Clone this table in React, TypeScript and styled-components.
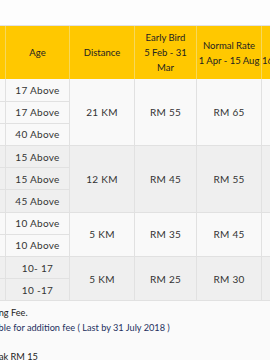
import React from 'react';
import styled, { createGlobalStyle } from 'styled-components';

const GlobalStyle = createGlobalStyle`
  html, body {
    margin: 0;
    padding: 0;
    background: #fafafa;
    overflow: hidden;
  }
  body {
    font-family: Lato, "Liberation Sans", sans-serif;
  }
`;

const Page = styled.div`
  width: 270px;
  height: 360px;
  overflow: hidden;
  background: #fafafa;
`;

const TopBar = styled.div`
  height: 25px;
  background: #fdfdfd;
  border-bottom: 1px solid #e2e2e2;
`;

// the table is wider than the window; the page is scrolled sideways
const Scroller = styled.div`
  margin-left: -95px;
  width: 520px;
`;

const PriceTable = styled.table`
  border-collapse: collapse;
  table-layout: fixed;
  width: 424px;
  font-size: 10px;
  color: #333;
`;

const Col = styled.col<{ $w: number }>`
  width: ${(p) => p.$w}px;
`;

const HeadCell = styled.th`
  height: 53px;
  padding: 0;
  box-sizing: border-box;
  background: #ffc800;
  border-left: 1px solid #f7d85a;
  color: #222;
  font-weight: 400;
  font-size: 9.5px;
  line-height: 15px;
  text-align: center;
  vertical-align: middle;
  white-space: nowrap;
  overflow: hidden;
`;

const Row = styled.tr<{ $shade: boolean }>`
  background: ${(p) => (p.$shade ? '#efefef' : '#f9f9f9')};
`;

const Cell = styled.td`
  height: 22.2px;
  padding: 0;
  box-sizing: border-box;
  border: 1px solid #e1e1e1;
  border-top: none;
  text-align: center;
  vertical-align: middle;
  white-space: nowrap;
  overflow: hidden;
  letter-spacing: 0.3px;
`;

const Notes = styled.div`
  padding: 5px 0 0 11px;
  font-size: 9.2px;
  line-height: 14.5px;
  color: #222;
  white-space: nowrap;
`;

const Note = styled.div<{ $blue?: boolean; $indent?: boolean }>`
  color: ${(p) => (p.$blue ? '#24305e' : '#222')};
  padding-left: ${(p) => (p.$indent ? 23 : 0)}px;
  min-height: 14.5px;
`;

type Group = {
  rows: { cat: string; age: string }[];
  distance: string;
  early: string;
  normal: string;
  late: string;
};

const groups: Group[] = [
  {
    rows: [
      { cat: 'Men Open', age: '17 Above' },
      { cat: 'Women Open', age: '17 Above' },
      { cat: 'Veteran', age: '40 Above' },
    ],
    distance: '21 KM',
    early: 'RM 55',
    normal: 'RM 65',
    late: 'RM 75',
  },
  {
    rows: [
      { cat: 'Men Open', age: '15 Above' },
      { cat: 'Women Open', age: '15 Above' },
      { cat: 'Veteran', age: '45 Above' },
    ],
    distance: '12 KM',
    early: 'RM 45',
    normal: 'RM 55',
    late: 'RM 65',
  },
  {
    rows: [
      { cat: 'Men Open', age: '10 Above' },
      { cat: 'Women Open', age: '10 Above' },
    ],
    distance: '5 KM',
    early: 'RM 35',
    normal: 'RM 45',
    late: 'RM 55',
  },
  {
    rows: [
      { cat: 'Boys', age: '10- 17' },
      { cat: 'Girls', age: '10 -17' },
    ],
    distance: '5 KM',
    early: 'RM 25',
    normal: 'RM 30',
    late: 'RM 35',
  },
];

const App: React.FC = () => {
  return (
    <Page>
      <GlobalStyle />
      <TopBar />
      <Scroller>
        <PriceTable>
          <colgroup>
            <Col $w={100} />
            <Col $w={64} />
            <Col $w={65} />
            <Col $w={62} />
            <Col $w={65} />
            <Col $w={68} />
          </colgroup>
          <thead>
            <tr>
              <HeadCell>Category</HeadCell>
              <HeadCell>Age</HeadCell>
              <HeadCell>Distance</HeadCell>
              <HeadCell>
                Early Bird
                <br />5 Feb - 31
                <br />Mar
              </HeadCell>
              <HeadCell>
                Normal Rate
                <br />1 Apr - 15 Aug
              </HeadCell>
              <HeadCell>
                Late Rate
                <br />16 Aug - 31 Aug
              </HeadCell>
            </tr>
          </thead>
          <tbody>
            {groups.map((g, gi) =>
              g.rows.map((r, ri) => (
                <Row key={`${gi}-${ri}`} $shade={gi % 2 === 1}>
                  <Cell>{r.cat}</Cell>
                  <Cell>{r.age}</Cell>
                  {ri === 0 && (
                    <>
                      <Cell rowSpan={g.rows.length}>{g.distance}</Cell>
                      <Cell rowSpan={g.rows.length}>{g.early}</Cell>
                      <Cell rowSpan={g.rows.length}>{g.normal}</Cell>
                      <Cell rowSpan={g.rows.length}>{g.late}</Cell>
                    </>
                  )}
                </Row>
              ))
            )}
          </tbody>
        </PriceTable>
        <Notes>
          <Note>Price inclusive Running Fee.</Note>
          <Note $blue>* Name on bib available for addition fee ( Last by 31 July 2018 )</Note>
          <Note>* Postage :</Note>
          <Note $indent>Sabah &amp; Sarawak RM 15</Note>
        </Notes>
      </Scroller>
    </Page>
  );
};

export default App;
